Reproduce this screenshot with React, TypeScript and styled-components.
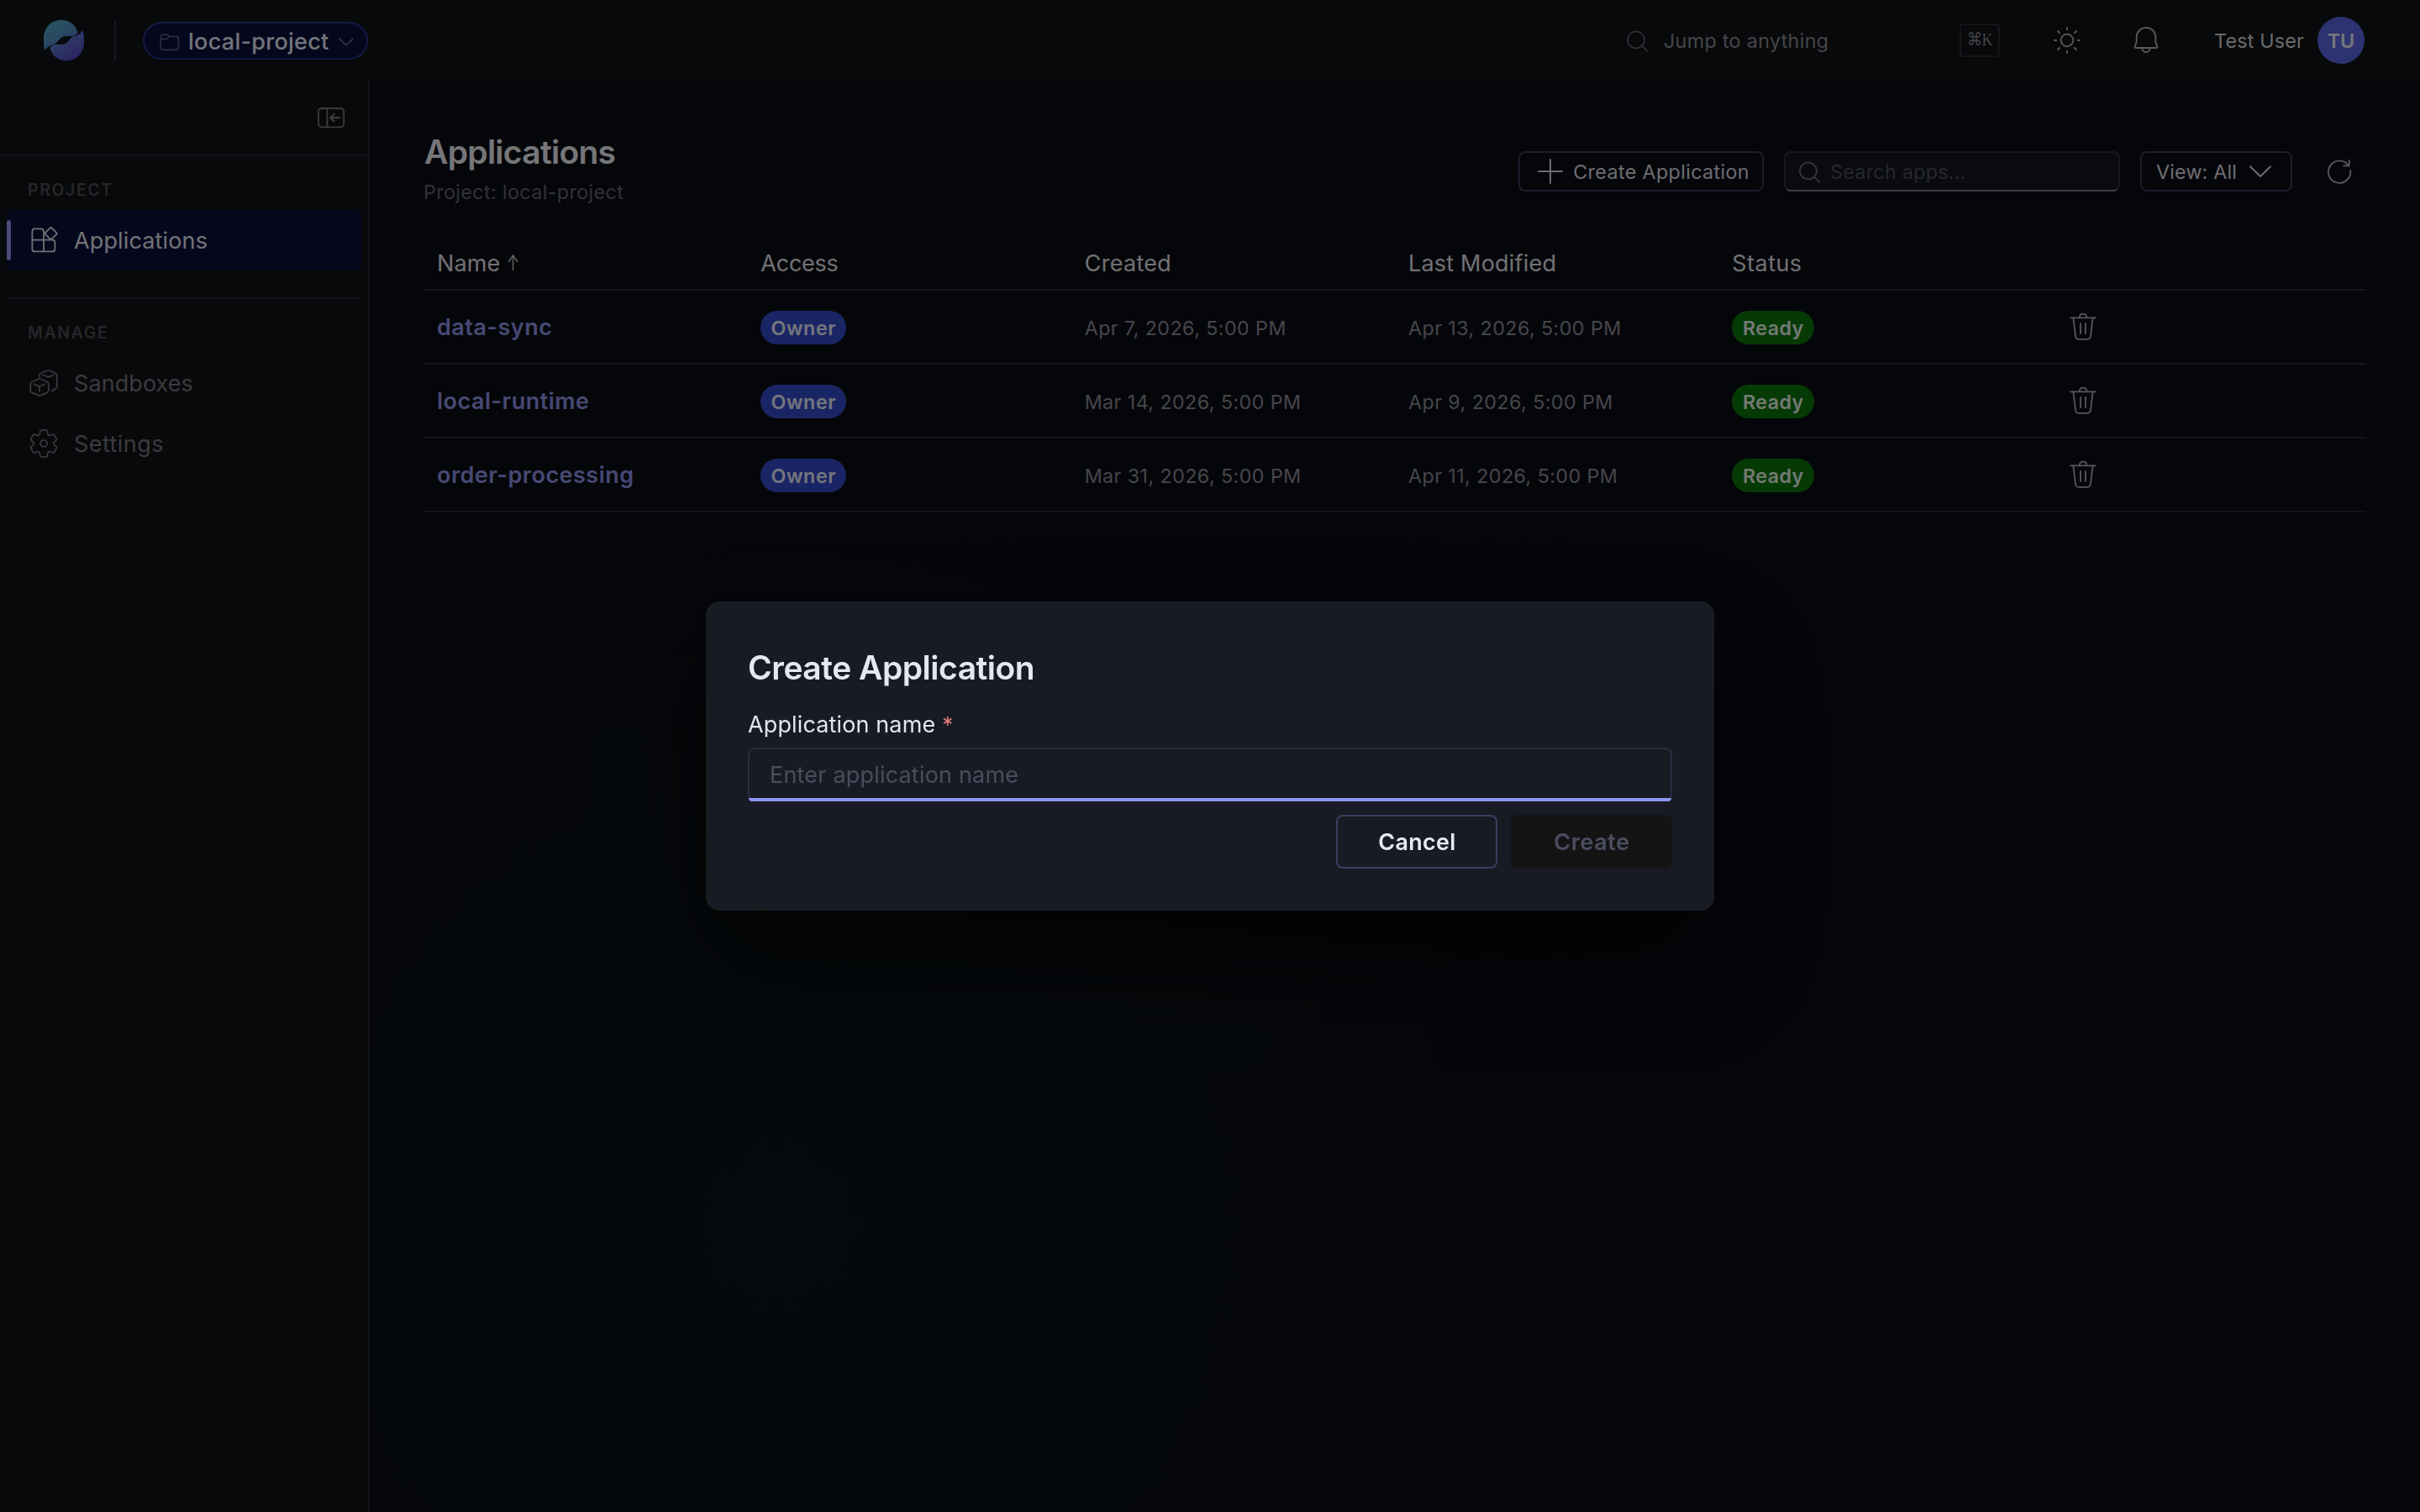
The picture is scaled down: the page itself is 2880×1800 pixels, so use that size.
import React from 'react';
import styled, { createGlobalStyle } from 'styled-components';

const color = {
  page: '#0a0c13',
  chrome: '#101215',
  line: '#24243a',
  rowLine: '#2a2b30',
  control: '#383856',
  text: '#e2e3e8',
  muted: '#8b8d96',
  dim: '#757780',
  faint: '#4a4d54',
  link: '#8f93e6',
  brand: '#344aca',
  accent: '#8f97f5',
  surface: '#181b23',
};

const GlobalStyle = createGlobalStyle`
  *, *::before, *::after { box-sizing: border-box; }
  body {
    margin: 0;
    background: #050609;
    color: ${color.text};
    font-family: Inter, 'Noto Sans', sans-serif;
    font-size: 27px;
    overflow: hidden;
  }
  button, input { font: inherit; color: inherit; margin: 0; }
`;

const Shell = styled.div`
  display: grid;
  grid-template: 96px 1fr / 440px 1fr;
  width: 2880px;
  height: 1800px;
  background: ${color.page};
`;

const Icon = styled.svg<{ $size?: number; $tone?: string; $weight?: number }>`
  display: block;
  flex: none;
  width: ${(p) => p.$size ?? 40}px;
  height: ${(p) => p.$size ?? 40}px;
  fill: none;
  stroke: ${(p) => p.$tone ?? 'currentColor'};
  stroke-width: ${(p) => p.$weight ?? 1.8};
  stroke-linecap: round;
  stroke-linejoin: round;
  overflow: visible;
`;

/* ---------- top bar ---------- */

const TopBar = styled.header`
  grid-column: 1 / -1;
  display: flex;
  align-items: center;
  padding: 0 66px 0 52px;
  background: ${color.chrome};
`;

const Logo = styled.svg`
  display: block;
  flex: none;
  width: 48px;
  height: 48px;
  overflow: visible;
`;

const Divider = styled.span`
  width: 2px;
  height: 48px;
  margin: 0 32px 0 36px;
  background: #2d2d4c;
`;

const ProjectPill = styled.button`
  display: flex;
  align-items: center;
  width: 268px;
  height: 45px;
  margin-top: 1px;
  padding: 2px 16px 0 18px;
  border: 2px solid #26338c;
  border-radius: 23px;
  background: #0a0e3a;
  color: #e6e8f6;
  font-weight: 500;
  letter-spacing: 0.28px;
`;

const PillLabel = styled.span`
  flex: 1;
  padding-left: 10px;
  text-align: left;
  white-space: nowrap;
`;

const JumpBox = styled.div`
  display: flex;
  align-items: center;
  width: 444px;
  margin-left: auto;
  color: ${color.muted};
  font-size: 23.3px;
  letter-spacing: 0.32px;
`;

const JumpLabel = styled.span`
  flex: 1;
  padding-left: 18px;
`;

const Kbd = styled.kbd`
  display: flex;
  align-items: center;
  justify-content: center;
  width: 48px;
  height: 40px;
  border: 2px solid #2a2b34;
  border-radius: 4px;
  color: #85878f;
  font-family: 'Liberation Serif', serif;
  font-size: 21px;
  letter-spacing: 0;
  line-height: 1;
`;

const KbdText = styled.span`
  transform: translateY(-1px) scaleX(0.86);
`;

const BarAction = styled.div`
  width: 40px;
  height: 40px;
  color: #b4b6ba;
`;

const BarActions = styled.div`
  display: flex;
  gap: 54px;
  margin-left: 60px;
`;

const User = styled.div`
  display: flex;
  align-items: center;
  justify-content: space-between;
  width: 179px;
  margin-left: 61px;
  color: #d4d6da;
  font-size: 23.3px;
  letter-spacing: 0.19px;
  white-space: nowrap;
`;

const Avatar = styled.span`
  display: flex;
  align-items: center;
  justify-content: center;
  width: 56px;
  height: 56px;
  border-radius: 50%;
  background: #5a66e0;
  color: #eceefa;
  font-weight: 600;
  letter-spacing: 0;
`;

/* ---------- sidebar ---------- */

const Sidebar = styled.nav`
  border-right: 2px solid ${color.line};
  background: ${color.chrome};
`;

const ToggleRow = styled.div`
  display: flex;
  align-items: center;
  justify-content: flex-end;
  height: 90px;
  padding-right: 24px;
  border-bottom: 2px solid ${color.line};
  color: #77797c;
`;

const NavSection = styled.section`
  margin: 0 8px;
  padding: 16px 0 32px;
  & + & { border-top: 2px solid ${color.line}; }
`;

const NavHeading = styled.h2`
  margin: 0;
  padding-left: 25px;
  color: ${color.faint};
  font-size: 19.4px;
  font-weight: 600;
  line-height: 48px;
  letter-spacing: 1.66px;
`;

const NavItem = styled.a<{ $active?: boolean; $track: number }>`
  display: flex;
  align-items: center;
  gap: 16px;
  height: 72px;
  padding-left: ${(p) => (p.$active ? 0 : 24)}px;
  border-radius: 8px;
  background: ${(p) => (p.$active ? '#0a0e3a' : 'transparent')};
  color: ${(p) => (p.$active ? '#e4e5ec' : color.dim)};
  letter-spacing: ${(p) => p.$track}px;
`;

const ActiveMark = styled.span`
  width: 5px;
  height: 48px;
  margin-right: 3px;
  border-radius: 3px;
  background: #9297ea;
`;

/* ---------- main ---------- */

const Main = styled.main`
  padding: 64px 64px 0;
  background:
    radial-gradient(circle at 20% 80%, rgba(22, 150, 110, 0.06) 0%, transparent 38%),
    radial-gradient(circle at 80% 20%, rgba(99, 102, 241, 0.01) 0%, transparent 50%);
`;

const PageHead = styled.div`
  display: flex;
  align-items: center;
  justify-content: space-between;
  height: 88px;
`;

const PageTitle = styled.h1`
  margin: 0 0 7px;
  padding-left: 1px;
  color: #ebecf0;
  font-size: 39px;
  font-weight: 600;
  line-height: 42px;
  letter-spacing: -0.72px;
`;

const PageSub = styled.p`
  margin: 0;
  color: #62656e;
  font-size: 23.3px;
  line-height: 39px;
  letter-spacing: 0.37px;
`;

const Toolbar = styled.div`
  display: flex;
  align-items: center;
  gap: 24px;
  font-size: 23.3px;
`;

const ToolButton = styled.button<{ $width: number; $pad: string; $track: number }>`
  display: flex;
  align-items: center;
  justify-content: space-between;
  width: ${(p) => p.$width}px;
  height: 48px;
  padding: ${(p) => p.$pad};
  border: 2px solid ${color.control};
  border-radius: 8px;
  background: transparent;
  color: #dadbe0;
  letter-spacing: ${(p) => p.$track}px;
  white-space: nowrap;
`;

const SearchField = styled.label`
  display: flex;
  align-items: center;
  gap: 11px;
  width: 400px;
  height: 48px;
  padding-left: 16px;
  border: 2px solid #303048;
  border-bottom-color: #78797e;
  border-radius: 8px;
  background: #15171d;
`;

const SearchInput = styled.input`
  flex: 1;
  min-width: 0;
  padding: 0;
  border: 0;
  outline: 0;
  background: transparent;
  letter-spacing: 0.28px;
  &::placeholder { color: #4b4f5e; opacity: 1; }
`;

const Refresh = styled.button`
  display: grid;
  place-items: center;
  width: 64px;
  height: 48px;
  padding: 0;
  border: 0;
  background: transparent;
  color: #b4b5ba;
`;

const Table = styled.div`
  margin-top: 32px;
`;

const Row = styled.div<{ $head?: boolean }>`
  display: grid;
  grid-template-columns: repeat(6, 1fr);
  align-items: center;
  height: ${(p) => (p.$head ? 66 : 88)}px;
  padding-top: ${(p) => (p.$head ? 3 : 0)}px;
  border-bottom: 2px solid ${color.rowLine};
`;

const Cell = styled.div`
  padding: 0 16px;
`;

const HeadCell = styled(Cell)<{ $track?: number }>`
  line-height: 34px;
  letter-spacing: ${(p) => p.$track ?? 0.3}px;
`;

const SortArrow = styled.span`
  display: inline-block;
  margin-left: 5px;
  font-size: 25px;
  font-weight: 300;
  line-height: 1;
  transform: translateY(-1px) scaleX(0.72);
`;

const BadgeCell = styled.div`
  padding: 2px 0 0 16px;
`;

const AppLink = styled.a`
  color: ${color.link};
  font-weight: 600;
  letter-spacing: 0.48px;
`;

const DateCell = styled(Cell)`
  padding-top: 3px;
  color: ${color.muted};
  font-size: 23.3px;
  letter-spacing: 0.41px;
`;

const Badge = styled.span<{ $kind: 'owner' | 'ready' }>`
  display: flex;
  align-items: center;
  justify-content: center;
  width: ${(p) => (p.$kind === 'owner' ? 102 : 98)}px;
  height: 40px;
  border-radius: 20px;
  background: ${(p) => (p.$kind === 'owner' ? color.brand : '#0a740a')};
  color: ${(p) => (p.$kind === 'owner' ? '#e8eafa' : '#e6f2e6')};
  font-size: 23.3px;
  font-weight: 600;
  letter-spacing: ${(p) => (p.$kind === 'owner' ? 0.62 : 0.37)}px;
`;

const DeleteCell = styled.div`
  padding-left: 28px;
  color: #b0b1b6;
`;

/* ---------- dialog ---------- */

const Backdrop = styled.div`
  position: fixed;
  inset: 0;
  display: grid;
  place-items: center;
  background: rgba(0, 0, 0, 0.5);
`;

const Dialog = styled.section`
  width: 1200px;
  height: 368px;
  padding: 48px;
  border: 2px solid #1a1c23;
  border-radius: 16px;
  background: ${color.surface};
  box-shadow: 0 0 16px rgba(0, 0, 0, 0.24), 0 64px 128px rgba(0, 0, 0, 0.6);
`;

const DialogTitle = styled.h2`
  margin: 0 0 19px;
  padding-top: 1px;
  color: #e6e8f1;
  font-size: 39px;
  font-weight: 600;
  line-height: 56px;
  letter-spacing: -0.49px;
`;

const FieldLabel = styled.label`
  display: flex;
  height: 42px;
  margin-bottom: 6px;
  color: #e4e5ec;
  line-height: 42px;
  letter-spacing: 0.13px;
`;

const Required = styled.span`
  margin-left: 8px;
  color: #e37d80;
  font-size: 26px;
`;

const NameField = styled.div`
  position: relative;
  height: 64px;
  border: 2px solid #2b2c44;
  border-radius: 8px;
  &::after {
    content: '';
    position: absolute;
    left: -1px;
    right: -1px;
    bottom: -2px;
    height: 4px;
    border-radius: 0 0 8px 8px;
    background: ${color.accent};
  }
`;

const NameInput = styled.input`
  display: block;
  width: 100%;
  height: 60px;
  padding: 0 24px;
  border: 0;
  outline: 0;
  background: transparent;
  letter-spacing: 0.19px;
  &::placeholder { color: #4a4d5e; opacity: 1; }
`;

const DialogActions = styled.div`
  display: flex;
  justify-content: flex-end;
  gap: 16px;
  margin-top: 16px;
`;

const DialogButton = styled.button<{ $disabled?: boolean }>`
  width: 192px;
  height: 64px;
  padding: 0 0 0 1px;
  border: 2px solid ${(p) => (p.$disabled ? '#141414' : '#3d3d60')};
  border-radius: 8px;
  background: ${(p) => (p.$disabled ? '#141414' : 'transparent')};
  color: ${(p) => (p.$disabled ? '#4b4d60' : '#e8e9f2')};
  font-weight: 600;
  letter-spacing: ${(p) => (p.$disabled ? 0.6 : 0.28)}px;
`;

/* ---------- drawings ---------- */

const LogoMark = () => (
  <Logo viewBox="0 0 48 48">
    <defs>
      <linearGradient id="mark" gradientUnits="userSpaceOnUse" x1="8" y1="2" x2="34" y2="46">
        <stop offset="0" stopColor="#50a8c0" />
        <stop offset="0.42" stopColor="#5090c4" />
        <stop offset="0.6" stopColor="#5a70c8" />
        <stop offset="1" stopColor="#584cc8" />
      </linearGradient>
    </defs>
    <g fill="url(#mark)">
      <path d="M0 22C0 9 9-.2 20.5-.2 31-.2 38.5 6 40.700 15.500L35.700 19.300C30 19.200 24 18.400 20.800 21 17.500 24 15.500 27.400 12.300 28.700 7 30 4.500 32 1.300 36 0 32 0 27 0 22Z" />
      <path d="M48 26C48 39 39 48.200 27.500 48.200 17 48.200 9.500 42 7.300 32.500L12.300 28.700C18 28.800 24 29.600 27.200 27 30.500 24 32.500 20.600 35.700 19.300 41 18 43.500 16 46.700 12 48 16 48 21 48 26Z" />
    </g>
  </Logo>
);

const FolderIcon = () => (
  <Icon viewBox="0 0 24 24" $size={24} $tone="#5b5d74" $weight={1.7}>
    <path d="M1.3 6.1a3 3 0 0 1 3-3h4c1 0 1.6.3 2.2.9l1.4 1.3h7.6a3 3 0 0 1 3 3v10a3 3 0 0 1-3 3H4.3a3 3 0 0 1-3-3zM1.3 8.6h5.6c1 0 1.6-.3 2.2-.9l2.8-2.4" />
  </Icon>
);

const ChevronIcon = ({ size, tone, weight }: { size: number; tone?: string; weight: number }) => (
  <Icon viewBox="0 0 24 24" $size={size} $tone={tone} $weight={weight}>
    <path d="M0 6.2 12 18 24 6.2" />
  </Icon>
);

const SearchIcon = ({ tone }: { tone: string }) => (
  <Icon viewBox="0 0 26 26" $size={26} $tone={tone} $weight={1.8}>
    <circle cx="11" cy="12.4" r="10" />
    <path d="m18.2 19.6 6.4 6.2" />
  </Icon>
);

const SunIcon = () => (
  <Icon viewBox="0 0 40 40">
    <circle cx="20" cy="20" r="7.3" />
    <path d="M20 5v2.2M20 32.8V35M5 20h2.2M32.8 20H35M9 9l2 2M29 29l2 2M9 31l2-2M29 11l2-2" />
  </Icon>
);

const BellIcon = () => (
  <Icon viewBox="0 0 40 40">
    <path d="M20 4.8C13.7 4.8 8.7 9.8 8.7 16v5.6l-2 5.8c-.4 1 .2 1.6 1 1.6h24.6c.8 0 1.4-.6 1-1.6l-2-5.8V16C31.3 9.8 26.3 4.8 20 4.8z" />
    <path d="M15.4 29.6c0 2.8 2 4.6 4.6 4.6s4.6-1.8 4.6-4.6" />
  </Icon>
);

const CollapseIcon = () => (
  <Icon viewBox="0 0 40 40">
    <rect x="5" y="9" width="30.2" height="22.4" rx="3.6" />
    <path d="M15.4 9v22.4" />
    <path d="M30 20.2H19.4M23.6 16l-4.4 4.2 4.4 4.2" strokeWidth="2.2" />
  </Icon>
);

const AppsIcon = () => (
  <Icon viewBox="0 0 40 40">
    <path d="M20 19.7V9.4a3 3 0 0 0-3-3H9.4a3 3 0 0 0-3 3v21a3 3 0 0 0 3 3h21a3 3 0 0 0 3-3v-7.7a3 3 0 0 0-3-3H6.4M20 19.7v13.7" />
    <rect x="23.2" y="6.6" width="10.8" height="10.8" rx="2" transform="rotate(45 28.6 12)" />
  </Icon>
);

const SandboxesIcon = () => (
  <Icon viewBox="0 0 40 40" $weight={1.7}>
    <path d="M13.6 15.2c.9-.4 1.9-.4 2.8 0l7.6 3.3c1.1.5 1.7 1.3 1.7 2.4v8c0 1.1-.6 2-1.7 2.5l-7.6 3.2c-.9.4-1.9.4-2.8 0L6 31.4c-1.1-.5-1.7-1.4-1.7-2.5v-8c0-1.1.6-1.9 1.7-2.4z" />
    <path d="M8.7 21.4 15 24l6.3-2.6M15 24v6" />
    <path d="M15 12.6v-2c0-1.1.6-1.9 1.7-2.4L24 5.3c.9-.4 1.9-.4 2.8 0L34 8.2c1.1.5 1.7 1.3 1.7 2.4v13.6c0 1.1-.6 2-1.7 2.5l-4.6 2.9" />
    <path d="m18.8 10.3 6.6 2.6 6.6-2.6" />
  </Icon>
);

const SettingsIcon = () => (
  <Icon viewBox="0 0 20 20" $weight={0.85}>
    <path
      transform="translate(10 10) scale(.95) translate(-10 -10)"
      d="M1.91 7.38A8.5 8.5 0 0 1 3.7 4.3a.5.5 0 0 1 .54-.13l1.92.68a1 1 0 0 0 1.32-.76l.36-2a.5.5 0 0 1 .4-.4 8.53 8.53 0 0 1 3.55 0c.2.04.35.2.38.4l.37 2a1 1 0 0 0 1.32.76l1.92-.68a.5.5 0 0 1 .54.13 8.5 8.5 0 0 1 1.78 3.08c.06.2 0 .4-.15.54l-1.56 1.32a1 1 0 0 0 0 1.52l1.56 1.32a.5.5 0 0 1 .15.54 8.5 8.5 0 0 1-1.78 3.08.5.5 0 0 1-.54.13l-1.92-.68a1 1 0 0 0-1.32.76l-.37 2a.5.5 0 0 1-.38.4 8.53 8.53 0 0 1-3.56 0 .5.5 0 0 1-.39-.4l-.36-2a1 1 0 0 0-1.32-.76l-1.92.68a.5.5 0 0 1-.54-.13 8.5 8.5 0 0 1-1.78-3.08.5.5 0 0 1 .15-.54l1.56-1.32a1 1 0 0 0 0-1.52L2.06 7.92a.5.5 0 0 1-.15-.54Z"
    />
    <circle cx="10" cy="10" r="2" />
  </Icon>
);

const PlusIcon = () => (
  <Icon viewBox="0 0 32 32" $size={32} $weight={2}>
    <path d="M16 2v28M2 16h28" />
  </Icon>
);

const RefreshIcon = () => (
  <Icon viewBox="0 0 40 40">
    <path d="M33.2 19A13.2 13.2 0 1 1 31 13.2" />
    <path d="M25.2 13.3h6.5V6.6" />
  </Icon>
);

const TrashIcon = () => (
  <Icon viewBox="0 0 40 40">
    <path d="M5 9.3h30M15.7 9c0-2.6 1.7-4.3 4.3-4.3s4.3 1.7 4.3 4.3" />
    <path d="M8.4 9.3 11 31c.3 2.5 1.8 3.9 4.2 3.9h9.6c2.4 0 3.9-1.4 4.2-3.9l2.6-21.7M17 16v12M23 16v12" />
  </Icon>
);

/* ---------- content ---------- */

const headings = [
  { label: 'Name', track: 0.11 },
  { label: 'Access', track: -0.25 },
  { label: 'Created', track: 0.3 },
  { label: 'Last Modified', track: 0.2 },
  { label: 'Status', track: 0.45 },
];

const apps = [
  { name: 'data-sync', created: 'Apr 7, 2026, 5:00 PM', modified: 'Apr 13, 2026, 5:00 PM' },
  { name: 'local-runtime', created: 'Mar 14, 2026, 5:00 PM', modified: 'Apr 9, 2026, 5:00 PM' },
  { name: 'order-processing', created: 'Mar 31, 2026, 5:00 PM', modified: 'Apr 11, 2026, 5:00 PM' },
];

export default function App() {
  return (
    <>
      <GlobalStyle />
      <Shell>
        <TopBar>
          <LogoMark />
          <Divider />
          <ProjectPill>
            <FolderIcon />
            <PillLabel>local-project</PillLabel>
            <ChevronIcon size={16} tone="#6a6c86" weight={2.4} />
          </ProjectPill>
          <JumpBox>
            <SearchIcon tone="#5a5c68" />
            <JumpLabel>Jump to anything</JumpLabel>
            <Kbd>
              <KbdText>⌘K</KbdText>
            </Kbd>
          </JumpBox>
          <BarActions>
            <BarAction><SunIcon /></BarAction>
            <BarAction><BellIcon /></BarAction>
          </BarActions>
          <User>
            Test User
            <Avatar>TU</Avatar>
          </User>
        </TopBar>

        <Sidebar>
          <ToggleRow>
            <CollapseIcon />
          </ToggleRow>
          <NavSection>
            <NavHeading>PROJECT</NavHeading>
            <NavItem $active $track={0.14}>
              <ActiveMark />
              <AppsIcon />
              Applications
            </NavItem>
          </NavSection>
          <NavSection>
            <NavHeading>MANAGE</NavHeading>
            <NavItem $track={0.08}>
              <SandboxesIcon />
              Sandboxes
            </NavItem>
            <NavItem $track={0.44}>
              <SettingsIcon />
              Settings
            </NavItem>
          </NavSection>
        </Sidebar>

        <Main>
          <PageHead>
            <div>
              <PageTitle>Applications</PageTitle>
              <PageSub>Project: local-project</PageSub>
            </div>
            <Toolbar>
              <ToolButton $width={292} $pad="0 15px 0 20px" $track={0.36}>
                <PlusIcon />
                Create Application
              </ToolButton>
              <SearchField>
                <SearchIcon tone="#66687a" />
                <SearchInput placeholder="Search apps..." />
              </SearchField>
              <ToolButton $width={181} $pad="0 24px 0 17px" $track={0.17}>
                View: All
                <ChevronIcon size={24} weight={2} />
              </ToolButton>
              <Refresh>
                <RefreshIcon />
              </Refresh>
            </Toolbar>
          </PageHead>

          <Table>
            <Row $head>
              {headings.map((h, i) => (
                <HeadCell key={h.label} $track={h.track}>
                  {h.label}
                  {i === 0 && <SortArrow>↑</SortArrow>}
                </HeadCell>
              ))}
            </Row>
            {apps.map((app) => (
              <Row key={app.name}>
                <Cell><AppLink>{app.name}</AppLink></Cell>
                <BadgeCell><Badge $kind="owner">Owner</Badge></BadgeCell>
                <DateCell>{app.created}</DateCell>
                <DateCell>{app.modified}</DateCell>
                <BadgeCell><Badge $kind="ready">Ready</Badge></BadgeCell>
                <DeleteCell><TrashIcon /></DeleteCell>
              </Row>
            ))}
          </Table>
        </Main>
      </Shell>

      <Backdrop>
        <Dialog>
          <DialogTitle>Create Application</DialogTitle>
          <FieldLabel>
            Application name<Required>*</Required>
          </FieldLabel>
          <NameField>
            <NameInput placeholder="Enter application name" />
          </NameField>
          <DialogActions>
            <DialogButton>Cancel</DialogButton>
            <DialogButton $disabled>Create</DialogButton>
          </DialogActions>
        </Dialog>
      </Backdrop>
    </>
  );
}
